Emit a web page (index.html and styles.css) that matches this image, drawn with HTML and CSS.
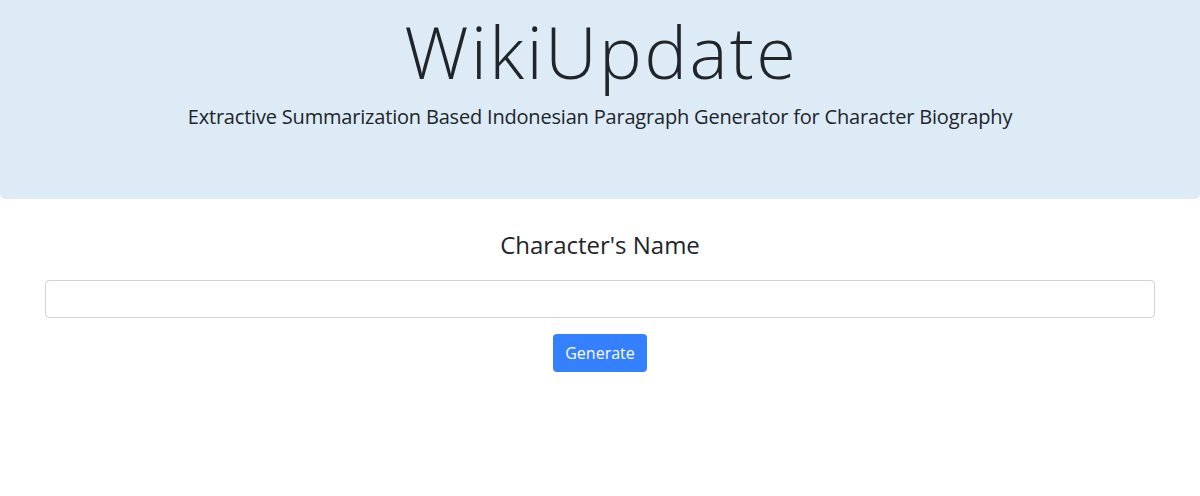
FILE: index.html
```html
<!DOCTYPE html>
<html lang="en">
<head>
<meta charset="utf-8">
<title>WikiUpdate</title>
<link rel="stylesheet" href="styles.css">
</head>
<body>
<header class="jumbotron">
  <h1 class="title">WikiUpdate</h1>
  <p class="lead">Extractive Summarization Based Indonesian Paragraph Generator for Character Biography</p>
</header>
<main class="container">
  <h4 class="label">Character's Name</h4>
  <input class="form-control" type="text">
  <button class="btn" type="button">Generate</button>
</main>
</body>
</html>
```

FILE: styles.css
```css
* { box-sizing: border-box; }
html, body { margin: 0; padding: 0; }
body {
  font-family: "Open Sans", "Noto Sans", sans-serif;
  color: #212529;
  background: #fff;
  width: 1200px;
}
.jumbotron {
  background: #dcebf6;
  height: 199px;
  border-radius: 0 0 5px 5px;
  display: flex;
  flex-direction: column;
  align-items: center;
  padding-top: 8px;
}
.title {
  margin: 0;
  font-size: 72px;
  font-weight: 300;
  line-height: 1.2;
  letter-spacing: 2.3px;
  padding-left: 2.3px;
}
.lead {
  margin: 8px 0 0;
  font-size: 20px;
  font-weight: 400;
  line-height: 1.5;
  letter-spacing: -0.19px;
}
.container {
  width: 1110px;
  margin: 0 auto;
  display: flex;
  flex-direction: column;
  align-items: center;
  padding-top: 32px;
}
.label {
  margin: 0 0 20px;
  font-size: 24px;
  font-weight: 400;
  line-height: 1.2;
}
.form-control {
  width: 100%;
  height: 38px;
  border: 1px solid #ced4da;
  border-radius: 4px;
  background: #fff;
  margin: 0 0 16px;
}
.btn {
  width: 94px;
  height: 38px;
  border: none;
  border-radius: 4px;
  background: #3480ff;
  color: #fff;
  font-family: inherit;
  font-size: 16px;
  font-weight: 400;
}
```
